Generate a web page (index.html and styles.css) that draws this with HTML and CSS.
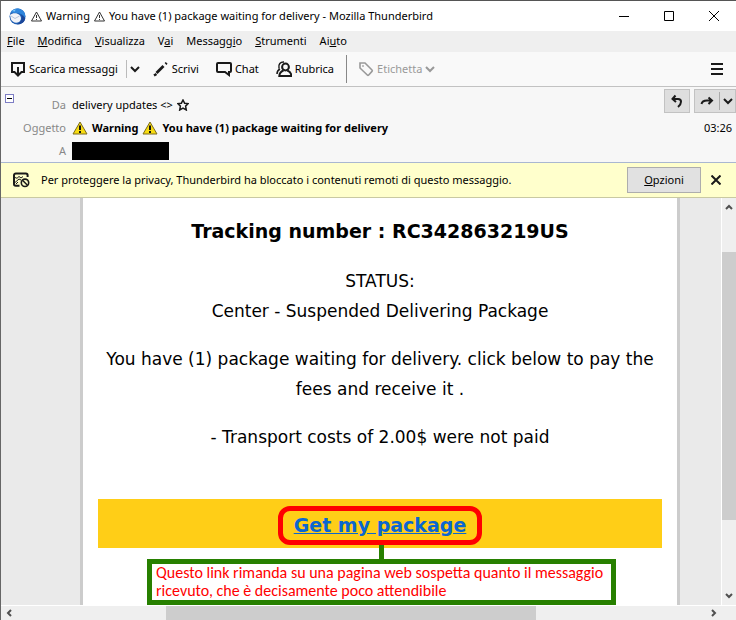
FILE: index.html
```html
<!DOCTYPE html>
<html lang="it">

<head>
    <meta charset="UTF-8">
    <meta name="viewport" content="width=device-width, initial-scale=1.0">
    <title>Warning You have (1) package waiting for delivery - Mozilla Thunderbird</title>
    <link rel="stylesheet" href="styles.css">
</head>

<body>
    <div class="window">
        <!-- Title bar -->
        <header class="titlebar">
            <svg class="app-icon" width="17" height="17" viewBox="0 0 17 17">
                <circle cx="8.5" cy="8.500" r="8" fill="#1f5fb4"/>
                <path d="M1.500 4.500C4 .5 8 0 11 1c4 1.500 6 5 5 9C15 7 11 4.500 6 5z" fill="#2f86dc"/>
                <path d="M1 7C3 5 8 4.500 10.500 7c2 2 2 5-.5 7-3 1.500-6.500.5-8-2.500z" fill="#f1f3f8"/>
                <path d="M2 8l4 2.500L10.500 8" fill="none" stroke="#b5c4da" stroke-width="1"/>
                <path d="M12 6.500c2 3 .5 7.500-4 9.800 4.500.4 8-2.300 8.300-6.300z" fill="#1b4699"/>
                <path d="M3 3l3.500-1.800L6 3.500z" fill="#7dc7f7"/>
            </svg>
            <h1 class="window-title">
                <svg class="warn-outline" width="11" height="11" viewBox="0 0 11 11"><path d="M5.500 1L10.500 10H.5zM5.500 4v3M5.500 8v1"/></svg>
                <span>Warning</span>
                <svg class="warn-outline" width="11" height="11" viewBox="0 0 11 11"><path d="M5.500 1L10.500 10H.5zM5.500 4v3M5.500 8v1"/></svg>
                <span>You have (1) package waiting for delivery - Mozilla Thunderbird</span>
            </h1>
            <div class="window-buttons">
                <button type="button" aria-label="Riduci"><svg width="12" height="12" viewBox="0 0 12 12"><path d="M1 6.500h10"/></svg></button>
                <button type="button" aria-label="Ingrandisci"><svg width="12" height="12" viewBox="0 0 12 12"><path d="M1.500 1.500h9v9h-9z"/></svg></button>
                <button type="button" aria-label="Chiudi"><svg width="12" height="12" viewBox="0 0 12 12"><path d="M1 1l10 10M11 1L1 11"/></svg></button>
            </div>
        </header>

        <!-- Menu bar -->
        <nav class="menubar">
            <a href="#"><u>F</u>ile</a>
            <a href="#"><u>M</u>odifica</a>
            <a href="#"><u>V</u>isualizza</a>
            <a href="#">V<u>a</u>i</a>
            <a href="#">Messagg<u>i</u>o</a>
            <a href="#"><u>S</u>trumenti</a>
            <a href="#">Ai<u>u</u>to</a>
        </nav>

        <!-- Toolbar -->
        <div class="toolbar">
            <button type="button" class="tool get-mail">
                <svg width="16" height="16" viewBox="0 0 16 16"><path d="M5 11H2V2h12v9h-3M8 6v8.500M4.500 11L8 14.500l3.500-3.500"/></svg>
                Scarica messaggi
            </button>
            <button type="button" class="tool drop" aria-label="Altre opzioni">
                <svg width="10" height="8" viewBox="0 0 10 8"><path d="M1 2l4 4 4-4"/></svg>
            </button>
            <button type="button" class="tool write">
                <svg width="16" height="16" viewBox="0 0 16 16"><path d="M3.500 12l7-7" stroke-width="2.800"/><path d="M1 14.500l2.500-1.500M12.500 3l1.200-1.200" stroke-width="2.500"/></svg>
                Scrivi
            </button>
            <button type="button" class="tool chat">
                <svg width="16" height="16" viewBox="0 0 16 16"><path d="M2 2h12a1 1 0 0 1 1 1v7a1 1 0 0 1-1 1h-1v3l-4-3H2a1 1 0 0 1-1-1V3a1 1 0 0 1 1-1z"/></svg>
                Chat
            </button>
            <button type="button" class="tool contacts">
                <svg width="16" height="16" viewBox="0 0 16 16"><path d="M3 7.500C2 3 4.500.8 8 1M4 8c-2 1-3 2.500-3 5" stroke-width="1.500"/><circle cx="9.500" cy="6" r="3.400"/><path d="M7.500 9.500C5 10.500 3.500 12 3.300 15h12c0-3-1.500-4.500-4-5.500" /></svg>
                Rubrica
            </button>
            <button type="button" class="tool tag" disabled>
                <svg width="16" height="16" viewBox="0 0 16 16"><path d="M2 2h5l7 7a1 1 0 0 1 0 1.400L10.700 14a1 1 0 0 1-1.400 0L2 7z" stroke-width="1.600"/><circle cx="5" cy="5" r=".5" stroke-width="1"/></svg>
                Etichetta
                <svg width="10" height="8" viewBox="0 0 10 8"><path d="M1 2l4 4 4-4"/></svg>
            </button>
            <button type="button" class="tool app-menu" aria-label="Menu">
                <svg width="12" height="12" viewBox="0 0 12 12"><path d="M0 1h12M0 6h12M0 11h12"/></svg>
            </button>
        </div>

        <!-- Message header -->
        <section class="message-header">
            <button type="button" class="collapse" aria-label="Comprimi"></button>
            <dl class="fields">
                <dt>Da</dt>
                <dd>delivery updates &lt;&gt;
                    <svg class="star" width="12" height="12" viewBox="0 0 12 12"><path d="M6 1l1.600 3.200 3.600.4-2.600 2.500.7 3.900L6 9.200l-3.300 1.800.7-3.900L.8 4.600l3.600-.4z"/></svg>
                </dd>
                <dt>Oggetto</dt>
                <dd class="subject">
                    <svg class="warn" width="16" height="14" viewBox="0 0 16 14"><path d="M8 1l7 12H1z" fill="#f8dc10" stroke="#7a6a20" stroke-width="1"/><path d="M8 4.500v4.500M8 10v2" stroke="#111" stroke-width="2"/></svg>
                    <span>Warning</span>
                    <svg class="warn" width="16" height="14" viewBox="0 0 16 14"><path d="M8 1l7 12H1z" fill="#f8dc10" stroke="#7a6a20" stroke-width="1"/><path d="M8 4.500v4.500M8 10v2" stroke="#111" stroke-width="2"/></svg>
                    <span>You have (1) package waiting for delivery</span>
                </dd>
                <dt>A</dt>
                <dd><span class="redacted"></span></dd>
            </dl>
            <div class="header-side">
                <div class="header-buttons">
                    <button type="button" aria-label="Rispondi"><svg width="14" height="14" viewBox="0 0 14 14"><path d="M5.500 1.500L2.500 5l3.500 3M3 5h5c4 0 4 4.500 0 8"/></svg></button>
                    <span class="split">
                        <button type="button" aria-label="Inoltra"><svg width="14" height="14" viewBox="0 0 14 14"><path d="M1.500 10C2 7.500 4 6.500 7 6.500h5M8.500 3.500l3.500 3-3.500 3.500"/></svg></button>
                        <button type="button" class="more" aria-label="Altro"><svg width="10" height="8" viewBox="0 0 10 8"><path d="M1 2l4 4 4-4"/></svg></button>
                    </span>
                </div>
                <time>03:26</time>
            </div>
        </section>

        <!-- Remote content notification -->
        <div class="notification">
            <svg class="blocked" width="17" height="16" viewBox="0 0 17 16"><path d="M6.500 13.800H2.800a1.800 1.800 0 0 1-1.800-1.800V3.300a1.800 1.800 0 0 1 1.800-1.800h10a1.800 1.800 0 0 1 1.800 1.800V5" stroke-width="2"/><path d="M2 5.500l2 .8L6 4.500l2 1.500 2-1.500M2 10.500l4-3.500 2 1M3 12l2-2" stroke-width="1"/><circle cx="12" cy="10.800" r="3.700" stroke-width="1.600"/><path d="M9.500 8.300l5 5" stroke-width="1.500"/></svg>
            <p>Per proteggere la privacy, Thunderbird ha bloccato i contenuti remoti di questo messaggio.</p>
            <button type="button" class="options"><u>O</u>pzioni</button>
            <button type="button" class="dismiss" aria-label="Chiudi"><svg width="10" height="10" viewBox="0 0 10 10"><path d="M.5.5l9 9M9.500.5l-9 9"/></svg></button>
        </div>

        <!-- Message body -->
        <div class="viewport">
            <main class="message">
                <article class="mail">
                    <h2>Tracking number : RC342863219US</h2>
                    <p>STATUS:<br>Center - Suspended Delivering Package</p>
                    <p>You have (1) package waiting for delivery. click below to pay the fees and receive it .</p>
                    <p>- Transport costs of 2.00$ were not paid</p>
                    <div class="cta">
                        <a href="#">Get my package</a>
                        <div class="callout">Questo link rimanda su una pagina web sospetta quanto il messaggio ricevuto, che è decisamente poco attendibile</div>
                    </div>
                </article>
            </main>
            <div class="scroll-y">
                <svg width="8" height="6" viewBox="0 0 8 6"><path d="M1 5l3-3 3 3"/></svg>
                <div class="track"><div class="thumb"></div></div>
                <svg width="8" height="6" viewBox="0 0 8 6"><path d="M1 1l3 3 3-3"/></svg>
            </div>
        </div>
        <div class="scroll-x">
            <svg width="6" height="8" viewBox="0 0 6 8"><path d="M5 1L2 4l3 3"/></svg>
            <div class="track"><div class="thumb"></div></div>
            <svg width="6" height="8" viewBox="0 0 6 8"><path d="M1 1l3 3-3 3"/></svg>
        </div>
    </div>
</body>

</html>
```
FILE: styles.css
```css
/* General Styles */
* {
    box-sizing: border-box;
}

body {
    margin: 0;
    font-family: "Noto Sans", "Open Sans", sans-serif;
    font-size: 11px;
    line-height: 16px;
    color: #000;
}

h1, h2, p, dl, dd {
    margin: 0;
}

button {
    font: inherit;
    color: inherit;
    padding: 0;
    border: none;
    background: none;
}

a {
    color: inherit;
    text-decoration: none;
}

svg {
    flex: none;
    fill: none;
    stroke: #1a1a1a;
    stroke-width: 2;
}

.app-icon {
    stroke: none;
}

.window {
    display: flex;
    flex-direction: column;
    height: 100vh;
    border-top: 1px solid #555;
    border-left: 1px solid #666;
    background-color: #f9f9f9;
}

/* Title bar */
.titlebar {
    display: flex;
    align-items: center;
    height: 30px;
    flex: none;
    padding-left: 8px;
    background-color: #fff;
}

.window-title {
    display: flex;
    align-items: center;
    gap: 4px;
    margin-left: 5px;
    font-size: 11px;
    font-weight: normal;
}

.warn-outline {
    stroke: #333;
    stroke-width: 1;
}

.window-buttons {
    display: flex;
    margin-left: auto;
}

.window-buttons button {
    display: flex;
    align-items: center;
    justify-content: center;
    width: 45px;
    height: 30px;
}

.window-buttons svg {
    stroke: #000;
    stroke-width: 1;
}

/* Menu bar */
.menubar {
    display: flex;
    align-items: center;
    gap: 13px;
    height: 21px;
    flex: none;
    padding: 0 6px 2px;
    background-color: #efefef;
}

/* Toolbar */
.toolbar {
    display: flex;
    align-items: center;
    height: 35px;
    flex: none;
    padding-left: 9px;
    border-bottom: 1px solid #c2c2c2;
}

.tool {
    display: flex;
    align-items: center;
    gap: 3px;
}

.drop {
    height: 18px;
    margin-left: 8px;
    padding-left: 3px;
    border-left: 1px solid #bbb;
}

.write {
    margin-left: 13px;
}

.chat,
.contacts {
    margin-left: 17px;
}

.tag {
    height: 28px;
    margin-left: 12px;
    padding-left: 11px;
    border-left: 1px solid #888;
    color: #999;
}

.tag svg {
    stroke: #999;
}

.app-menu {
    margin: 0 13px 0 auto;
}

/* Message header */
.message-header {
    display: flex;
    height: 75px;
    flex: none;
    background-color: #f7f7f7;
}

.collapse {
    display: flex;
    align-items: center;
    justify-content: center;
    width: 9px;
    height: 9px;
    margin: 7px 0 0 4px;
    border: 1px solid #7d7dc4;
    background-color: #fff;
}

.collapse::before {
    content: "";
    width: 5px;
    height: 1px;
    background-color: #000;
}

.fields {
    display: grid;
    grid-template-columns: 52px 1fr;
    column-gap: 6px;
    grid-auto-rows: 23px;
    align-items: center;
    padding-top: 6px;
}

.fields dt {
    text-align: right;
    color: #888;
}

.fields dd {
    display: flex;
    align-items: center;
    gap: 4px;
}

.star {
    stroke-width: 1.5;
}

.subject {
    font-weight: bold;
}

.redacted {
    width: 97px;
    height: 18px;
    background-color: #000;
}

.header-side {
    display: flex;
    flex-direction: column;
    align-items: flex-end;
    gap: 7px;
    margin-left: auto;
    padding-top: 2px;
}

.header-side time {
    padding-right: 4px;
}

.header-buttons {
    display: flex;
    gap: 4px;
}

.header-buttons > button,
.split {
    display: flex;
    align-items: center;
    justify-content: center;
    height: 24px;
    border: 1px solid #c2c2c2;
    background-color: #dedede;
}

.header-buttons > button {
    width: 26px;
}

.split button {
    display: flex;
    align-items: center;
    justify-content: center;
    width: 24px;
    height: 18px;
}

.split .more {
    width: 16px;
    border-left: 1px solid #aaa;
}

/* Notification */
.notification {
    display: flex;
    align-items: center;
    height: 36px;
    flex: none;
    padding: 0 15px 0 12px;
    border-top: 1px solid #a9b7d1;
    border-bottom: 1px solid #c9c9a2;
    background-color: #ffc;
}

.notification p {
    margin-left: 11px;
}

.options {
    width: 74px;
    height: 26px;
    margin-left: auto;
    border: 1px solid #adadad;
    background-color: #e1e1e1;
}

.dismiss {
    display: flex;
    margin-left: 10px;
}

/* Message body */
.viewport {
    display: flex;
    flex: 1;
    min-height: 0;
    background-color: #eaeaea;
}

.message {
    flex: 1;
    padding: 0 41px 0 79px;
    overflow: hidden;
}

.mail {
    min-height: 100%;
    padding: 18px 15px 0;
    border: 3px solid #ccc;
    border-width: 0 3px;
    background-color: #fff;
    font-family: Verdana, "DejaVu Sans", sans-serif;
    font-size: 17px;
    line-height: 30px;
    text-align: center;
}

.mail h2 {
    margin-bottom: 20px;
    font-size: 19px;
}

.mail p {
    margin-bottom: 18px;
}

.cta {
    position: relative;
    margin-top: 47px;
    padding: 7px 0 3px;
    background-color: #ffce17;
    line-height: 29px;
}

.cta a {
    display: inline-block;
    padding: 0 11px;
    border: 5px solid #f00;
    border-radius: 12px;
    color: #0b66d0;
    font-size: 19px;
    font-weight: bold;
    text-decoration: underline;
}

/* Note laid over the mail, tied to the link */
.callout {
    position: absolute;
    top: 60px;
    left: 49px;
    right: 46px;
    padding: 0 4px;
    border: 5px solid #278000;
    background-color: #fff;
    color: #f00;
    font-family: Calibri, Carlito, Lato, sans-serif;
    font-size: 16px;
    line-height: 18px;
    text-align: left;
}

.callout::before {
    content: "";
    position: absolute;
    top: -19px;
    left: calc(50% - 3px);
    width: 5px;
    height: 14px;
    background-color: #278000;
}

/* Scrollbars */
.scroll-y,
.scroll-x {
    display: flex;
    align-items: center;
    flex: none;
    background-color: #efefef;
}

.scroll-y {
    flex-direction: column;
    width: 15px;
    padding: 6px 0;
    border-left: 1px solid #fff;
}

.scroll-y .track {
    width: 100%;
}

.scroll-x {
    height: 15px;
    padding: 0 19px 0 5px;
    border-top: 1px solid #fff;
}

.scroll-y svg,
.scroll-x svg {
    stroke: #505050;
}

.track {
    flex: 1;
    align-self: stretch;
}

.thumb {
    background-color: #cdcdcd;
}

.scroll-y .thumb {
    height: 70%;
    margin-top: 42px;
}

.scroll-x .thumb {
    width: 53%;
    height: 100%;
    margin-left: 154px;
}
```
